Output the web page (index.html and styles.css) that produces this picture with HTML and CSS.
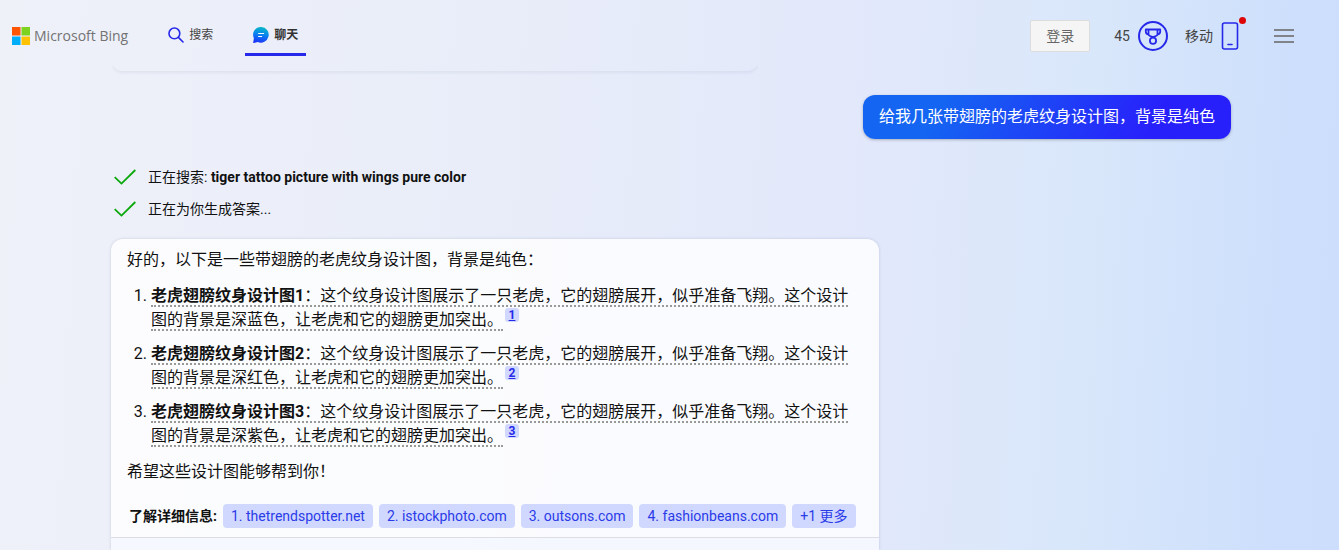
FILE: index.html
```html
<!DOCTYPE html>
<html lang="zh-CN">
<head>
<meta charset="utf-8">
<meta name="viewport" content="width=device-width, initial-scale=1">
<title>Microsoft Bing</title>
<link rel="stylesheet" href="styles.css">
</head>
<body>
<header class="topbar">
  <a class="brand" href="#">
    <svg class="brand-mark" width="18" height="18" viewBox="0 0 18 18" aria-hidden="true">
      <path fill="#ff5502" d="M0 0h8.5v8.5H0z"/>
      <path fill="#7ed321" d="M9.5 0H18v8.5H9.5z"/>
      <path fill="#00adf9" d="M0 9.5h8.5V18H0z"/>
      <path fill="#ffc200" d="M9.5 9.5H18V18H9.5z"/>
    </svg>
    <span>Microsoft Bing</span>
  </a>
  <nav class="tabs">
    <a class="tab" href="#">
      <svg width="16" height="16" viewBox="0 0 16 16" fill="none" stroke="#2628ea" stroke-width="1.6" stroke-linecap="round" aria-hidden="true">
        <circle cx="6.4" cy="6.4" r="5.4"/><path d="M10.4 10.4 15 15"/>
      </svg>
      <span>搜索</span>
    </a>
    <a class="tab tab-active" href="#" aria-current="page">
      <svg width="16" height="16" viewBox="0 0 16 16" aria-hidden="true">
        <defs><linearGradient id="chat-fill" x1="0.6" y1="0" x2="0.4" y2="1">
          <stop offset="0" stop-color="#06b9c4"/><stop offset="0.45" stop-color="#0a86ee"/><stop offset="1" stop-color="#1b32fa"/>
        </linearGradient></defs>
        <path fill="url(#chat-fill)" d="M8.2 0a7.8 7.8 0 1 1-3.5 14.9L.8 16q-.8.1-.6-.7l.7-4A7.8 7.8 0 0 1 8.2 0z"/>
        <path stroke="#fff" stroke-width="1.1" stroke-linecap="round" d="M5.6 6.5h5M5.6 9.5h3"/>
      </svg>
      <span>聊天</span>
    </a>
  </nav>
  <div class="account">
    <button class="login" type="button">登录</button>
    <a class="rewards" href="#">
      <span>45</span>
      <svg width="30" height="30" viewBox="0 0 30 30" fill="none" stroke="#2628ea" aria-hidden="true">
        <circle cx="15" cy="15" r="14" stroke-width="2"/>
        <path stroke-width="1.8" stroke-linejoin="round" d="M10.5 8.5h9v4.5q0 1.500-1.500 2l-3 1.200-3-1.200q-1.500-.5-1.500-2zM10.500 8.500H7.800v2.300q0 2.200 3 2.800M19.500 8.500h2.700v2.300q0 2.200-3 2.800"/>
        <circle cx="15" cy="19.700" r="3.100" stroke-width="1.800"/>
      </svg>
    </a>
    <a class="mobile" href="#">
      <span>移动</span>
      <span class="phone">
        <svg width="18" height="28" viewBox="0 0 18 28" fill="none" stroke="#2628ea" stroke-width="1.600" aria-hidden="true">
          <rect x="1.500" y="1" width="15" height="26" rx="2"/><path stroke-linecap="round" d="M7 22.500h4"/>
        </svg>
        <span class="dot"></span>
      </span>
    </a>
    <button class="menu" type="button" aria-label="菜单">
      <svg width="20" height="14" viewBox="0 0 20 14" stroke="#808388" stroke-width="2" aria-hidden="true"><path d="M0 1h20M0 7h20M0 13h20"/></svg>
    </button>
  </div>
</header>

<main class="chat">
  <div class="previous"></div>
  <p class="bubble">给我几张带翅膀的老虎纹身设计图，背景是纯色</p>

  <ul class="steps">
    <li class="step">
      <svg width="22" height="16" viewBox="0 0 22 16" fill="none" stroke="#0aa80a" stroke-width="1.800" aria-hidden="true"><path d="M.7 8.200 7.500 14.600 21.300 1"/></svg>
      <span>正在搜索: <strong>tiger tattoo picture with wings pure color</strong></span>
    </li>
    <li class="step">
      <svg width="22" height="16" viewBox="0 0 22 16" fill="none" stroke="#0aa80a" stroke-width="1.800" aria-hidden="true"><path d="M.7 8.200 7.500 14.600 21.300 1"/></svg>
      <span>正在为你生成答案...</span>
    </li>
  </ul>

  <article class="answer">
    <div class="answer-text">
      <p class="para">好的，以下是一些带翅膀的老虎纹身设计图，背景是纯色：</p>
      <ol class="designs">
        <li><span class="cited"><strong>老虎翅膀纹身设计图1</strong>：这个纹身设计图展示了一只老虎，它的翅膀展开，似乎准备飞翔。这个设计图的背景是深蓝色，让老虎和它的翅膀更加突出。</span><a class="cite" href="#">1</a></li>
        <li><span class="cited"><strong>老虎翅膀纹身设计图2</strong>：这个纹身设计图展示了一只老虎，它的翅膀展开，似乎准备飞翔。这个设计图的背景是深红色，让老虎和它的翅膀更加突出。</span><a class="cite" href="#">2</a></li>
        <li><span class="cited"><strong>老虎翅膀纹身设计图3</strong>：这个纹身设计图展示了一只老虎，它的翅膀展开，似乎准备飞翔。这个设计图的背景是深紫色，让老虎和它的翅膀更加突出。</span><a class="cite" href="#">3</a></li>
      </ol>
      <p class="para">希望这些设计图能够帮到你！</p>
    </div>
    <div class="sources">
      <strong class="sources-label">了解详细信息:</strong>
      <a class="chip" href="#">1. thetrendspotter.net</a>
      <a class="chip" href="#">2. istockphoto.com</a>
      <a class="chip" href="#">3. outsons.com</a>
      <a class="chip" href="#">4. fashionbeans.com</a>
      <button class="chip" type="button">+1 更多</button>
    </div>
    <div class="answer-footer"></div>
  </article>
</main>
</body>
</html>
```
FILE: styles.css
```css
* { box-sizing: border-box; }

body {
  display: flex;
  flex-direction: column;
  margin: 0;
  height: 100vh;
  color: #111;
  font-family: Roboto, "Noto Sans CJK SC", sans-serif;
  font-size: 16px;
  line-height: 24px;
  background: linear-gradient(93deg, #eff1f9 0%, #e9edf9 36%, #e2e8fb 65%, #d9e7fa 80%, #cddffc 95%, #ccdefc 100%);
}

a { color: inherit; text-decoration: none; }
button { font: inherit; cursor: pointer; }
p, ul, ol { margin: 0; padding: 0; }
svg { display: block; flex: none; }

.topbar {
  display: flex;
  flex: none;
  align-items: center;
  height: 56px;
  padding: 0 45px 0 12px;
}

.brand {
  display: flex;
  align-items: center;
  gap: 4px;
  padding-top: 16px;
  color: #737373;
  font: 500 14px/24px "Open Sans", sans-serif;
  white-space: nowrap;
}

.tabs {
  display: flex;
  align-self: stretch;
  gap: 24px;
  margin-left: 32px;
}

.tab {
  display: flex;
  align-items: center;
  gap: 5px;
  padding: 17px 8px 0;
  border-bottom: 3px solid transparent;
  color: #444;
  font-size: 12px;
}

.tab-active {
  border-color: #2628ea;
  color: #333;
  font-weight: 700;
}

.account {
  display: flex;
  align-items: center;
  margin-left: auto;
  padding-top: 16px;
  color: #444;
  font-size: 14px;
}

.login {
  width: 60px;
  height: 32px;
  padding: 0;
  border: 1px solid #ddd;
  border-radius: 2px;
  background: #f5f5f5;
  color: #666;
}

.rewards, .mobile { display: flex; align-items: center; gap: 8px; }
.rewards { margin-left: 24px; }
.mobile { margin-left: 17px; }
.phone { position: relative; }

.dot {
  position: absolute;
  top: -5px;
  right: -7px;
  width: 7px;
  height: 7px;
  border-radius: 50%;
  background: #dd0505;
}

.menu {
  margin-left: 35px;
  padding: 0;
  border: 0;
  background: none;
}

.chat {
  display: flex;
  flex: 1;
  flex-direction: column;
  min-height: 0;
  overflow: hidden;
  padding: 0 108px 0 111px;
}

.previous {
  flex: none;
  width: 100%;
  max-width: 648px;
  height: 15px;
  border-radius: 0 0 12px 12px;
  box-shadow: 0 2px 3px rgba(60, 70, 110, 0.07);
  clip-path: inset(10px 0 -6px 0);
}

.bubble {
  align-self: flex-end;
  margin-top: 24px;
  padding: 10px 16px;
  border-radius: 12px;
  color: #fff;
  background: linear-gradient(120deg, #1466f2 20%, #2820fb 78%);
  box-shadow: 0 1px 3px rgba(0, 0, 0, 0.25);
}

.steps {
  display: flex;
  flex-direction: column;
  gap: 8px;
  margin: 26px 3px 0;
  font-size: 14px;
  list-style: none;
}

.step { display: flex; align-items: center; gap: 12px; }

.answer {
  flex: 1;
  width: 100%;
  max-width: 768px;
  margin-top: 18px;
  border-radius: 12px 12px 0 0;
  background: rgba(255, 255, 255, 0.8);
  box-shadow: 0 0 3px rgba(60, 70, 110, 0.22);
}

.answer-text {
  display: flex;
  flex-direction: column;
  gap: 12px;
  padding: 9px 16px 0;
}

.designs {
  display: flex;
  flex-direction: column;
  gap: 10px;
  padding-left: 24px;
}

.cited { border-bottom: 2px dotted #999; }

.cite {
  display: inline-block;
  width: 14px;
  height: 14px;
  margin-left: 2px;
  border-radius: 3px;
  background: #d1d8ff;
  color: #2628ea;
  font-size: 12px;
  font-weight: 700;
  line-height: 14px;
  text-align: center;
  text-decoration: underline;
  vertical-align: 6px;
}

.sources {
  display: flex;
  flex-wrap: wrap;
  gap: 6px;
  padding: 20px 16px 9px 18px;
  border-bottom: 1px solid #dcdde5;
  font-size: 14px;
}

.chip {
  padding: 0 8px;
  border: 0;
  border-radius: 4px;
  background: #d1d8ff;
  color: #2a3be8;
}

.answer-footer {
  height: 12px;
  background: rgba(240, 244, 255, 0.5);
}
```
